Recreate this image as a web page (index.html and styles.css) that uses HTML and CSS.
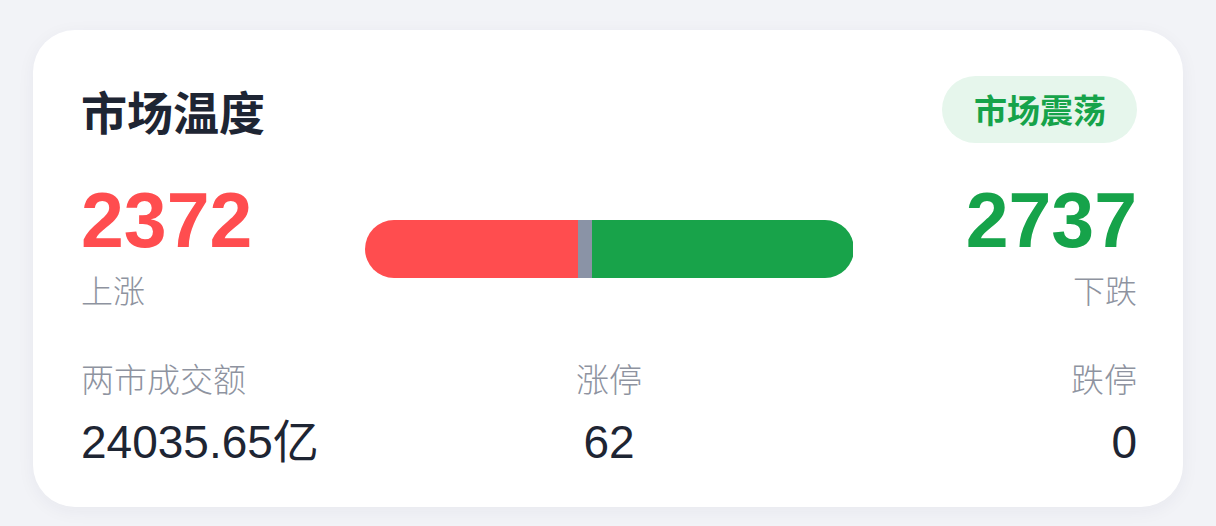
FILE: index.html
```html
<!DOCTYPE html>
<html lang="zh-CN">
<head>
<meta charset="utf-8">
<title>市场温度</title>
<link rel="stylesheet" href="styles.css">
</head>
<body>
<main class="page">
  <section class="card">
    <header class="card-head">
      <h2 class="title">市场温度</h2>
      <span class="badge">市场震荡</span>
    </header>

    <div class="breadth">
      <div class="stat stat-up">
        <div class="stat-num">2372</div>
        <div class="stat-label">上涨</div>
      </div>
      <div class="bar">
        <span class="seg seg-up" style="width:43.6%"></span>
        <span class="seg seg-flat" style="width:2.9%"></span>
        <span class="seg seg-down" style="width:53.5%"></span>
      </div>
      <div class="stat stat-down">
        <div class="stat-num">2737</div>
        <div class="stat-label">下跌</div>
      </div>
    </div>

    <div class="summary">
      <div class="item item-left">
        <div class="item-label">两市成交额</div>
        <div class="item-value">24035.65亿</div>
      </div>
      <div class="item item-mid">
        <div class="item-label">涨停</div>
        <div class="item-value">62</div>
      </div>
      <div class="item item-right">
        <div class="item-label">跌停</div>
        <div class="item-value">0</div>
      </div>
    </div>
  </section>
</main>
</body>
</html>
```

FILE: styles.css
```css
* {
  box-sizing: border-box;
}

html, body {
  margin: 0;
  padding: 0;
}

body {
  background: #f2f3f7;
  font-family: "Liberation Sans", "Noto Sans CJK SC", sans-serif;
  color: #1e2533;
}

.page {
  width: 1216px;
  height: 526px;
  padding: 30px 33px 0 33px;
}

.card {
  width: 1150px;
  height: 477px;
  background: #ffffff;
  border-radius: 42px;
  box-shadow: 0 4px 18px rgba(30, 40, 70, 0.05);
  padding: 46px 46px 0 48px;
}

.card-head {
  display: flex;
  justify-content: space-between;
  align-items: center;
  height: 67px;
}

.title {
  margin: 0;
  font-family: "Noto Sans CJK SC", sans-serif;
  font-size: 46px;
  font-weight: 700;
  line-height: 1;
  color: #1e2533;
}

.badge {
  display: inline-flex;
  align-items: center;
  height: 67px;
  padding: 0 31px 0 32px;
  border-radius: 34px;
  background: #e6f6ec;
  color: #16a34a;
  font-family: "Noto Sans CJK SC", sans-serif;
  font-size: 33px;
  font-weight: 700;
  line-height: 1;
}

.breadth {
  display: grid;
  grid-template-columns: 1fr 489px 1fr;
  align-items: start;
  margin-top: 39px;
}

.stat-num {
  font-size: 77px;
  font-weight: 700;
  line-height: 77px;
}

.stat-label {
  font-family: "Noto Sans CJK SC", sans-serif;
  font-size: 32px;
  font-weight: 300;
  line-height: 40px;
  color: #8e93a0;
  margin-top: 10px;
}

.stat-up .stat-num {
  color: #ff4d4f;
}

.stat-down {
  text-align: right;
}

.stat-down .stat-num {
  color: #16a34a;
}

.bar {
  display: flex;
  height: 58px;
  border-radius: 29px;
  overflow: hidden;
  margin-top: 38px;
}

.seg {
  display: block;
  height: 100%;
}

.seg-up {
  background: #ff4d4f;
}

.seg-flat {
  background: #8a93a6;
}

.seg-down {
  background: #18a34a;
}

.summary {
  display: grid;
  grid-template-columns: 1fr 1fr 1fr;
  margin-top: 49px;
}

.item-label {
  font-family: "Noto Sans CJK SC", sans-serif;
  font-size: 33px;
  font-weight: 300;
  line-height: 40px;
  color: #8e93a0;
}

.item-value {
  font-size: 46px;
  line-height: 52px;
  margin-top: 18px;
  color: #1e2533;
}

.item-mid {
  text-align: center;
}

.item-right {
  text-align: right;
}
```
